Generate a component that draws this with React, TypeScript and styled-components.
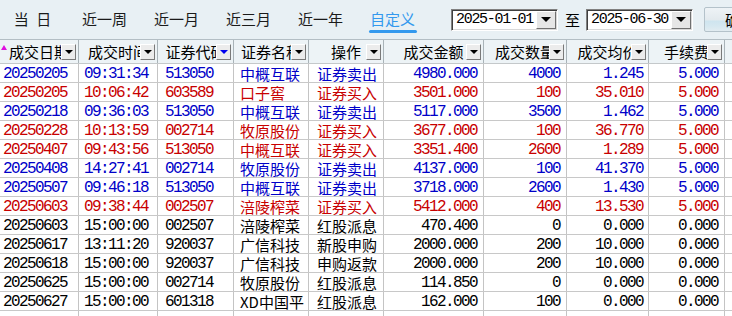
import React from "react";
import styled, { createGlobalStyle } from "styled-components";

const GlobalStyle = createGlobalStyle`
  html, body {
    margin: 0;
    padding: 0;
    background: #ffffff;
    overflow: hidden;
  }
  body {
    font-family: "Noto Sans CJK SC", "Noto Sans", sans-serif;
  }
`;

const CJK = `"Noto Sans CJK SC", "Noto Sans", sans-serif`;
const MONO = `"Liberation Mono", "Noto Sans CJK SC", monospace`;

type Align = "left" | "right";
type Kind = "num" | "text";
type Tone = "blue" | "red" | "black";

interface Col {
  label: string;
  w: number;
  kind: Kind;
  align: Align;
  pad: number;
  sortUp?: boolean;
  activeFilter?: boolean;
}

const COLS: Col[] = [
  { label: "成交日期", w: 79, kind: "num", align: "left", pad: 3, sortUp: true },
  { label: "成交时间", w: 79, kind: "num", align: "left", pad: 5 },
  { label: "证券代码", w: 76, kind: "num", align: "left", pad: 7, activeFilter: true },
  { label: "证券名称", w: 75, kind: "text", align: "left", pad: 6 },
  { label: "操作", w: 75, kind: "text", align: "left", pad: 8 },
  { label: "成交金额", w: 100, kind: "num", align: "right", pad: 6 },
  { label: "成交数量", w: 83, kind: "num", align: "right", pad: 6 },
  { label: "成交均价", w: 82, kind: "num", align: "right", pad: 5 },
  { label: "手续费", w: 76, kind: "num", align: "right", pad: 6 },
];

const TEMPLATE = COLS.map((c) => `${c.w}px`).join(" ") + " 90px";

type Row = [string, string, string, string, string, string, string, string, string, Tone];

const ROWS: Row[] = [
  ["20250205", "09:31:34", "513050", "中概互联", "证券卖出", "4980.000", "4000", "1.245", "5.000", "blue"],
  ["20250205", "10:06:42", "603589", "口子窖", "证券买入", "3501.000", "100", "35.010", "5.000", "red"],
  ["20250218", "09:36:03", "513050", "中概互联", "证券卖出", "5117.000", "3500", "1.462", "5.000", "blue"],
  ["20250228", "10:13:59", "002714", "牧原股份", "证券买入", "3677.000", "100", "36.770", "5.000", "red"],
  ["20250407", "09:43:56", "513050", "中概互联", "证券买入", "3351.400", "2600", "1.289", "5.000", "red"],
  ["20250408", "14:27:41", "002714", "牧原股份", "证券卖出", "4137.000", "100", "41.370", "5.000", "blue"],
  ["20250507", "09:46:18", "513050", "中概互联", "证券卖出", "3718.000", "2600", "1.430", "5.000", "blue"],
  ["20250603", "09:38:44", "002507", "涪陵榨菜", "证券买入", "5412.000", "400", "13.530", "5.000", "red"],
  ["20250603", "15:00:00", "002507", "涪陵榨菜", "红股派息", "470.400", "0", "0.000", "0.000", "black"],
  ["20250617", "13:11:20", "920037", "广信科技", "新股申购", "2000.000", "200", "10.000", "0.000", "black"],
  ["20250618", "15:00:00", "920037", "广信科技", "申购返款", "2000.000", "200", "10.000", "0.000", "black"],
  ["20250625", "15:00:00", "002714", "牧原股份", "红股派息", "114.850", "0", "0.000", "0.000", "black"],
  ["20250627", "15:00:00", "601318", "XD中国平", "红股派息", "162.000", "100", "0.000", "0.000", "black"],
];

const TONES: Record<Tone, string> = {
  blue: "#0000c8",
  red: "#c80000",
  black: "#000000",
};

const TABS = ["当\u2002日", "近一周", "近一月", "近三月", "近一年", "自定义"];

/* ---------- top bar ---------- */

const Page = styled.div`
  width: 732px;
  height: 316px;
  overflow: hidden;
  background: #ffffff;
`;

const TopBar = styled.div`
  height: 39px;
  display: flex;
  align-items: center;
  background: #e8f0f4;
  white-space: nowrap;
`;

const Tabs = styled.div`
  display: flex;
  gap: 7px;
  align-self: stretch;
`;

const Tab = styled.div<{ $active?: boolean }>`
  width: 65px;
  display: flex;
  flex-direction: column;
  align-items: center;
  padding-top: 9px;
  box-sizing: border-box;
  font-family: ${CJK};
  font-size: 15px;
  line-height: 20px;
  color: ${(p) => (p.$active ? "#3399ee" : "#1a1a1a")};
  cursor: pointer;
`;

const TabLine = styled.span<{ $active?: boolean }>`
  display: block;
  width: 48px;
  height: 3px;
  margin-top: 1px;
  border-radius: 2px;
  background: ${(p) => (p.$active ? "#3399ee" : "transparent")};
`;

const DateRange = styled.div`
  display: flex;
  align-items: center;
  margin-left: 26px;
`;

const DateBox = styled.div`
  width: 107px;
  height: 22px;
  box-sizing: border-box;
  display: flex;
  align-items: center;
  background: #ffffff;
  border-style: solid;
  border-width: 1px;
  border-color: #808080 #ffffff #ffffff #808080;
  box-shadow: inset 1px 1px 0 #404040, inset -1px -1px 0 #d8d8d8;
  padding: 1px 1px 1px 2px;
`;

const DateText = styled.span`
  flex: 1;
  font-family: ${MONO};
  font-size: 15px;
  letter-spacing: -1.3px;
  line-height: 18px;
  color: #000;
  padding-left: 2px;
  padding-top: 1px;
`;

const DropBtn = styled.span`
  width: 20px;
  height: 18px;
  box-sizing: border-box;
  display: flex;
  align-items: center;
  justify-content: center;
  background: #e6e6e6;
  border-style: solid;
  border-width: 1px;
  border-color: #ffffff #707070 #707070 #ffffff;
`;

const Arrow = styled.span<{ $size: number; $color?: string }>`
  width: 0;
  height: 0;
  border-left: ${(p) => p.$size}px solid transparent;
  border-right: ${(p) => p.$size}px solid transparent;
  border-top: ${(p) => p.$size}px solid ${(p) => p.$color || "#000"};
`;

const ToLabel = styled.span`
  font-family: ${CJK};
  font-size: 15px;
  color: #000;
  margin: 0 6px 0 7px;
`;

const QueryButton = styled.button`
  margin-left: 11px;
  flex: none;
  width: 72px;
  height: 25px;
  box-sizing: border-box;
  border: 1px solid #b4c2ca;
  border-radius: 2px;
  background: linear-gradient(
    #eef3f6 0%,
    #e3eaee 50%,
    #cfe5ef 58%,
    #d6e8f0 80%,
    #e2ecf1 100%
  );
  font-family: ${CJK};
  font-size: 15px;
  color: #000;
  padding: 0;
`;

/* ---------- table ---------- */

const Table = styled.div`
  display: flex;
  flex-direction: column;
`;

const HeaderRow = styled.div`
  display: grid;
  grid-template-columns: ${TEMPLATE};
  height: 25px;
  box-sizing: border-box;
  background: #edf3f6;
  border-top: 1px solid #b3bec4;
  border-bottom: 1px solid #c4c8ca;
`;

const HeadCell = styled.div`
  position: relative;
  display: flex;
  align-items: center;
  justify-content: center;
  overflow: hidden;
  white-space: nowrap;
  border-right: 1px solid #a9b3b8;
  font-family: ${CJK};
  font-size: 15px;
  color: #000;
`;

const HeadDrop = styled.span`
  position: absolute;
  right: 2px;
  top: 4px;
  width: 15px;
  height: 16px;
  box-sizing: border-box;
  display: flex;
  align-items: center;
  justify-content: center;
  background: #ececec;
  border-style: solid;
  border-width: 1px;
  border-color: #ffffff #7a7a7a #7a7a7a #ffffff;
`;

const SortMark = styled.span`
  position: absolute;
  left: 1px;
  top: 5px;
  width: 0;
  height: 0;
  border-left: 3px solid transparent;
  border-right: 3px solid transparent;
  border-bottom: 5px solid #e010e0;
`;

const DataRow = styled.div`
  display: grid;
  grid-template-columns: ${TEMPLATE};
  height: 19px;
  box-sizing: border-box;
  border-bottom: 1px solid #c8c8c8;
`;

const Cell = styled.div<{ $kind: Kind; $align: Align; $pad: number; $tone: Tone }>`
  display: flex;
  align-items: center;
  justify-content: ${(p) => (p.$align === "right" ? "flex-end" : "flex-start")};
  padding: ${(p) => (p.$kind === "num" ? "2px" : "1px")}
    ${(p) => (p.$align === "right" ? `${p.$pad}px` : "0")} 0
    ${(p) => (p.$align === "right" ? "0" : `${p.$pad}px`)};
  border-right: 1px solid #c4c4c4;
  white-space: nowrap;
  color: ${(p) => TONES[p.$tone]};
  font-family: ${(p) => (p.$kind === "num" ? MONO : CJK)};
  font-size: ${(p) => (p.$kind === "num" ? "16px" : "15px")};
  letter-spacing: ${(p) => (p.$kind === "num" ? "-1.6px" : "0")};
  line-height: 16px;
`;

const FillCell = styled.div`
  border-right: 1px solid #c4c4c4;
`;

export default function App() {
  return (
    <Page>
      <GlobalStyle />
      <TopBar>
        <Tabs>
          {TABS.map((t, i) => (
            <Tab key={t} $active={i === 5}>
              <span>{t}</span>
              <TabLine $active={i === 5} />
            </Tab>
          ))}
        </Tabs>
        <DateRange>
          <DateBox>
            <DateText>2025-01-01</DateText>
            <DropBtn>
              <Arrow $size={5} />
            </DropBtn>
          </DateBox>
          <ToLabel>至</ToLabel>
          <DateBox>
            <DateText>2025-06-30</DateText>
            <DropBtn>
              <Arrow $size={5} />
            </DropBtn>
          </DateBox>
        </DateRange>
        <QueryButton>确定</QueryButton>
      </TopBar>

      <Table>
        <HeaderRow>
          {COLS.map((c) => (
            <HeadCell key={c.label}>
              {c.sortUp && <SortMark />}
              {c.label}
              <HeadDrop>
                <Arrow $size={4} $color={c.activeFilter ? "#0000ee" : "#000"} />
              </HeadDrop>
            </HeadCell>
          ))}
          <HeadCell />
        </HeaderRow>
        {ROWS.map((r, ri) => (
          <DataRow key={ri}>
            {COLS.map((c, ci) => (
              <Cell key={ci} $kind={c.kind} $align={c.align} $pad={c.pad} $tone={r[9]}>
                {r[ci]}
              </Cell>
            ))}
            <FillCell />
          </DataRow>
        ))}
        <DataRow>
          {COLS.map((c, ci) => (
            <FillCell key={ci} />
          ))}
          <FillCell />
        </DataRow>
      </Table>
    </Page>
  );
}
